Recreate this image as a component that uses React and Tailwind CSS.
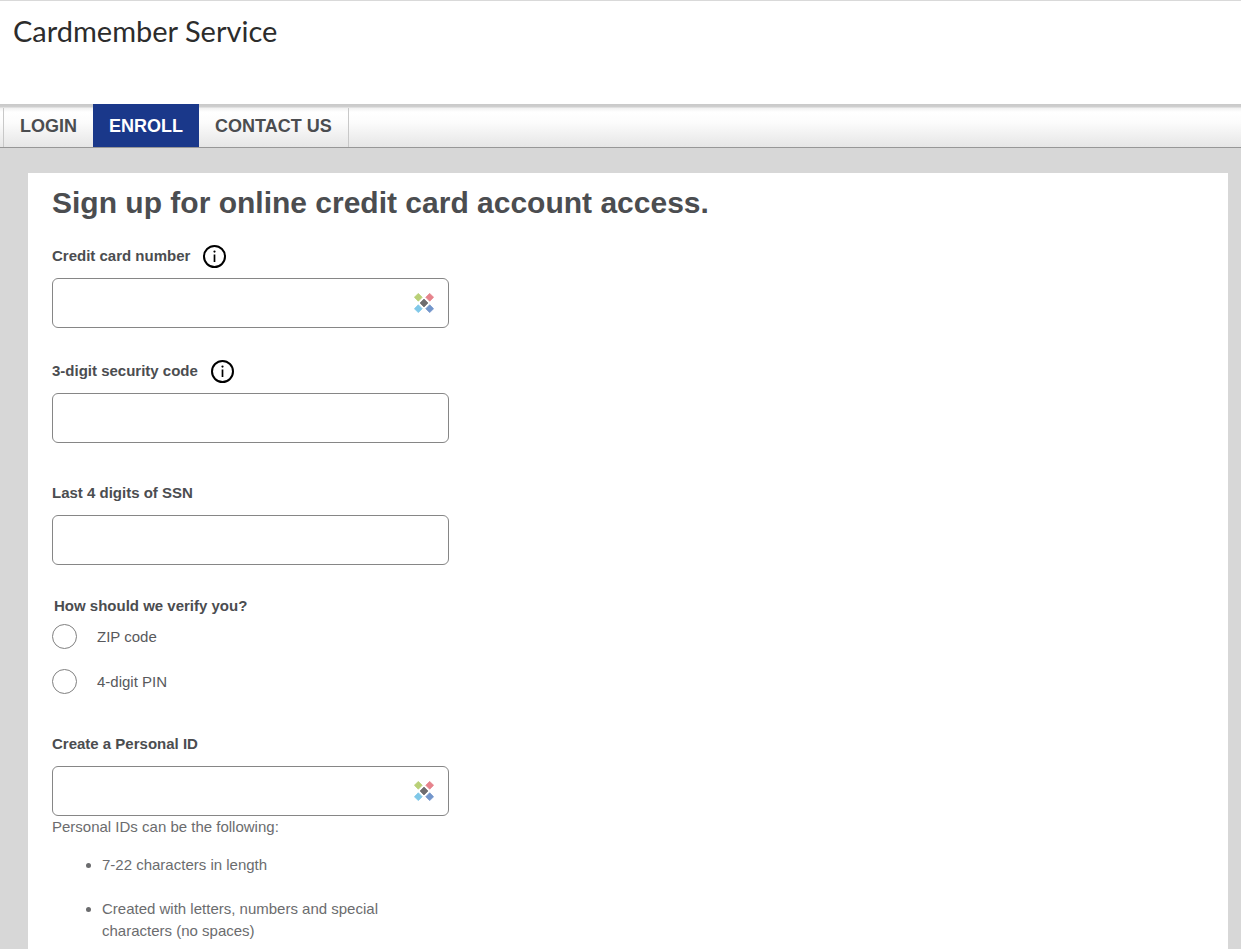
const tabs = [
  { label: 'LOGIN', href: '#login' },
  { label: 'ENROLL', href: '#enroll', active: true },
  { label: 'CONTACT US', href: '#contact' },
]

function InfoIcon() {
  return (
    <svg viewBox="0 0 24 24" className="size-6" aria-hidden="true">
      <circle cx="12.5" cy="11.5" r="10.5" fill="none" stroke="#000" strokeWidth="2" />
      <circle cx="12.5" cy="6.6" r="1.1" fill="#000" />
      <path d="M12.5 9.5v7.5" stroke="#000" strokeWidth="1.7" />
    </svg>
  )
}

function VaultIcon() {
  return (
    <svg viewBox="0 0 20 20" className="size-5" strokeLinejoin="round" strokeWidth="0.8" aria-hidden="true">
      <path d="M4.3 0.4 8.2 4.3 4.3 8.2 0.4 4.3Z" fill="#b9d077" stroke="#b9d077" />
      <path d="M15.7 0.4 19.6 4.3 15.7 8.2 11.8 4.3Z" fill="#e6838c" stroke="#e6838c" />
      <path d="M4.3 11.8 8.2 15.7 4.3 19.6 0.4 15.7Z" fill="#7fc8e8" stroke="#7fc8e8" />
      <path d="M15.7 11.8 19.6 15.7 15.7 19.6 11.8 15.7Z" fill="#7396cb" stroke="#7396cb" />
      <path d="M10 6.1 13.9 10 10 13.9 6.1 10Z" fill="#6f6d70" stroke="#6f6d70" />
    </svg>
  )
}

function Field({ id, label, info, vault, className }) {
  return (
    <div className={className}>
      <div className="flex h-6 items-start gap-3">
        <label htmlFor={id} className="text-[15px] font-bold leading-[22px]">{label}</label>
        {info && (
          <button type="button" aria-label={`About ${label}`} className="cursor-pointer">
            <InfoIcon />
          </button>
        )}
      </div>
      <div className="relative mt-[9px]">
        <input
          id={id}
          type="text"
          className="block h-[50px] w-full rounded-md border border-[#868686] bg-white px-3 text-[15px] outline-none focus:border-[#1a388a]"
        />
        {vault && (
          <span className="pointer-events-none absolute inset-y-0 right-[15px] flex items-center">
            <VaultIcon />
          </span>
        )}
      </div>
    </div>
  )
}

function Choice({ value, label }) {
  return (
    <label className="flex w-fit items-center gap-5 text-[15px] leading-5 text-[#58595c]">
      <input
        type="radio"
        name="verify"
        value={value}
        className="size-[25px] appearance-none rounded-full border border-[#808080] bg-white checked:border-8 checked:border-[#1a388a]"
      />
      {label}
    </label>
  )
}

export default function App() {
  return (
    <div className="flex min-h-screen flex-col bg-[#d7d7d7] font-['Liberation_Sans',Arial,sans-serif] text-[#4b4d50]">
      <header className="h-[104px] border-t border-[#d9d9d9] bg-white px-[13px] pt-3">
        <div className="font-['Lato',sans-serif] text-[29px] leading-9 text-[#2c2c2c]">Cardmember Service</div>
      </header>

      <nav className="flex h-11 border-b border-[#979797] bg-[linear-gradient(to_bottom,#c9c9c9_0px,#cfcfcf_3px,#f1f1f1_4px,#ffffff_8px,#fcfcfc_18px,#e6e6e6_100%)] pl-[3px] text-lg font-bold">
        {tabs.map((tab) => (
          <a
            key={tab.label}
            href={tab.href}
            aria-current={tab.active ? 'page' : undefined}
            className={
              tab.active
                ? 'flex items-center bg-[#1a388a] px-4 text-white'
                : 'mt-1 flex items-center border-x border-[#c8c8c8] px-4 pb-1 first:border-r-0 last:border-l-0'
            }
          >
            {tab.label}
          </a>
        ))}
      </nav>

      <main className="mt-[25px] ml-7 mr-[13px] grow bg-white px-6 pt-3 pb-2">
        <h1 className="text-[30px] font-bold leading-9">Sign up for online credit card account access.</h1>

        <form className="mt-6 w-[397px] max-w-full">
          <Field id="card" label="Credit card number" info vault />
          <Field id="code" label="3-digit security code" info className="mt-8" />
          <Field id="ssn" label="Last 4 digits of SSN" className="mt-[39px]" />

          <fieldset className="mt-[29px]">
            <legend className="px-[2px] text-[15px] font-bold leading-6">How should we verify you?</legend>
            <div className="mt-[6px] flex flex-col gap-5">
              <Choice value="zip" label="ZIP code" />
              <Choice value="pin" label="4-digit PIN" />
            </div>
          </fieldset>

          <Field id="personal-id" label="Create a Personal ID" vault className="mt-[39px]" />
          <div className="text-[15px] leading-[22px] text-[#6b6c6e]">
            <p>Personal IDs can be the following:</p>
            <ul className="mt-4 flex list-disc flex-col gap-[22px] pl-[50px] pr-10">
              <li>7-22 characters in length</li>
              <li>Created with letters, numbers and special characters (no spaces)</li>
            </ul>
          </div>
        </form>
      </main>
    </div>
  )
}
